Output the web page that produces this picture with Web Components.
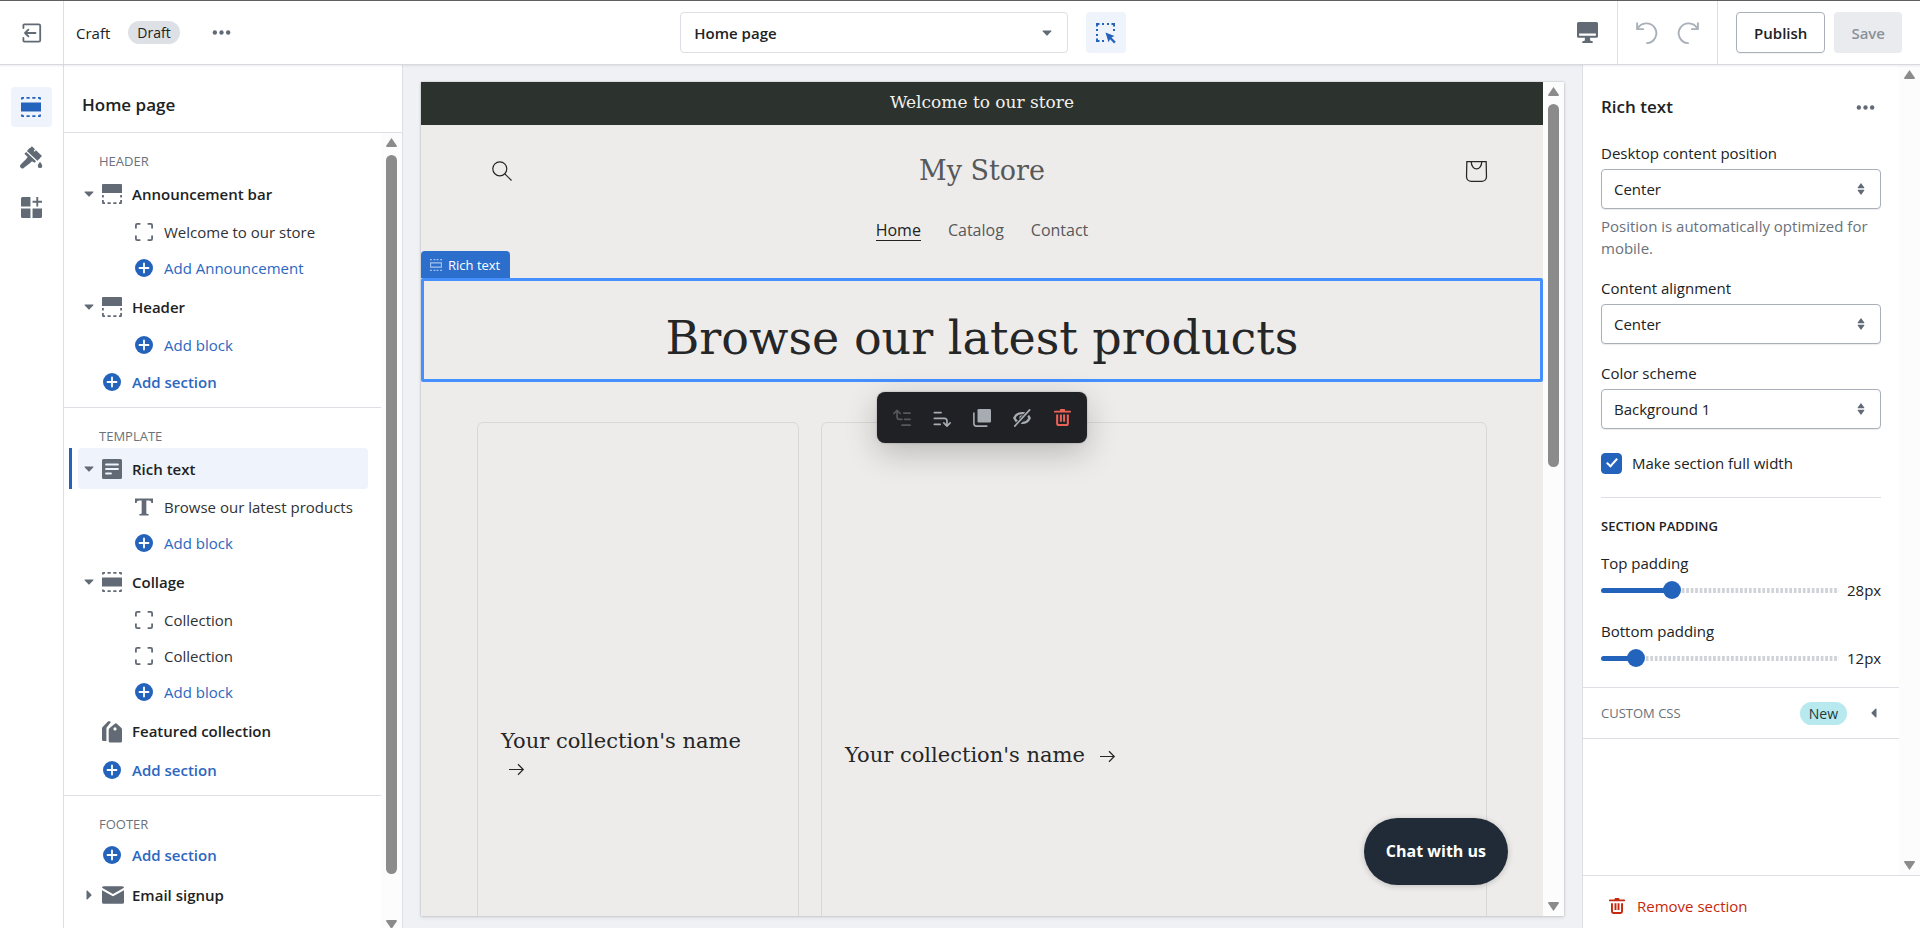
<!DOCTYPE html>
<html lang="en">
<head>
<meta charset="utf-8">
<meta name="viewport" content="width=device-width, initial-scale=1">
<title>Craft - Theme editor</title>
<style>
	:root {
		--text: #202223;
		--subdued: #6a727b;
		--icon: #616a75;
		--blue: #2463bc;
		--link: #2c67c0;
		--line: #dcdfe3;
		--selected: #eff3fc;
		--field-border: #aab0b9;
		--store-font: "DejaVu Serif", serif;
	}
	body {
		margin: 0;
		font: 15px/22px "Open Sans", "Noto Sans", sans-serif;
		color: var(--text);
	}
</style>
</head>
<body>
<theme-editor></theme-editor>

<script>
const base = `
	*, *::before, *::after { box-sizing: border-box; }
	button { font: inherit; color: inherit; background: none; border: 0; padding: 0; margin: 0; cursor: pointer; }
	a { color: inherit; text-decoration: none; }
	h1, h2, h3, p { margin: 0; font: inherit; }
`;

// small helper so every element sets up its shadow root the same way
class Base extends HTMLElement {
	constructor() {
		super();
		this.attachShadow({ mode: "open" });
	}
	connectedCallback() {
		this.shadowRoot.innerHTML = `<style>${base}${this.styles()}</style>${this.markup()}`;
	}
	styles() { return ""; }
	markup() { return "<slot></slot>"; }
}

const icons = {
	exit: `<g fill="none" stroke="currentColor" stroke-width="1.8" stroke-linecap="round" stroke-linejoin="round"><path d="M1.4 5V2.2a.8.8 0 0 1 .8-.8h14.6a1.4 1.4 0 0 1 1.4 1.4v14.400a1.4 1.4 0 0 1-1.4 1.400H2.200a.8.8 0 0 1-.8-.8V15"/><path d="M13.500 10H3.200M6.400 6.600 3 10l3.400 3.400"/></g>`,
	dots: `<circle cx="3" cy="10" r="2.3"/><circle cx="10" cy="10" r="2.3"/><circle cx="17" cy="10" r="2.3"/>`,
	section: `<path d="M0 5.5h20v9H0z"/><path d="M0 2.4V1.2A1.2 1.2 0 0 1 1.2 0H3v1.8H1.8v.6zM5.5 0h3.2v1.8H5.5zM11.3 0h3.2v1.8h-3.2zM17 0h1.8A1.2 1.2 0 0 1 20 1.2v1.2h-1.8v-.6H17zM0 17.6v1.2A1.2 1.2 0 0 0 1.2 20H3v-1.8H1.8v-.6zM5.5 18.2h3.2V20H5.5zM11.3 18.2h3.2V20h-3.2zM17 18.2V20h1.8a1.2 1.2 0 0 0 1.2-1.2v-1.2h-1.8v.6z"/>`,
	sectionLine: `<g fill="none" stroke="currentColor" stroke-width="1.8"><path d="M1 6.5h18v7H1z"/><path d="M0 1h3M6 1h3M11 1h3M17 1h3M0 19h3M6 19h3M11 19h3M17 19h3"/></g>`,
	header: `<path d="M1 0h18a1 1 0 0 1 1 1v8H0V1a1 1 0 0 1 1-1zM0 11h1.8v2.6H0zM18.2 11H20v2.6h-1.8zM0 16h1.8v2.2H3V20H1.2A1.2 1.2 0 0 1 0 18.8zM5.5 18.2h3.2V20H5.5zM11.3 18.2h3.2V20h-3.2zM18.2 16H20v2.8a1.2 1.2 0 0 1-1.2 1.2H17v-1.8h1.2z"/>`,
	brush: `<path d="M10.8.3 13.600 3l-1.200 1.500.8.700 1.300-1.300L20 9.200l-3 2.800-6.600-3.900L7.800 3.400z"/><path d="M8.800 1.800 18.200 11l-2.400 2.300L6.300 4.500zM5.600 5.500l9 8.400-1.500 1.400-2.200-1.400-1.600 1.500L3.600 19.800a2 2 0 0 1-3-2.900l5-5L7 10 4 7z"/><path d="M18.200 14.400s2 2.400 2 3.700a2 2 0 0 1-4 0c0-1.300 2-3.700 2-3.700z"/>`,
	apps: `<path d="M1.5 0H9v9H0V1.5A1.5 1.5 0 0 1 1.5 0zM0 11h9v9H1.5A1.5 1.5 0 0 1 0 18.5zM11 11h9v7.5a1.5 1.5 0 0 1-1.5 1.5H11zM14.600 0h1.800v3.600H20v1.800h-3.600V9h-1.800V5.400H11V3.600h3.600z"/>`,
	inspect: `<path d="M1 3.5V1h2.5M6 1h2M11 1h2M15.5 1H18v2.500M1 6v2M1 11v2M1 15.500V18h2.500M6 18h2M18 6v2" fill="none" stroke="currentColor" stroke-width="2"/><path d="M9.500 9.500 18.500 13l-3 1.600 4.200 4.200-1.600 1.600-4-4.200-1.600 3z"/>`,
	desktop: `<path d="M1.5 0h17A1.5 1.5 0 0 1 20 1.5v12a1.5 1.5 0 0 1-1.5 1.5h-6v2.500l2.500 1V20H5v-1.500l2.500-1V15h-6A1.5 1.5 0 0 1 0 13.500v-12A1.5 1.5 0 0 1 1.5 0zM2 11v2h16v-2z" fill-rule="evenodd"/>`,
	undo: `<g fill="none" stroke="currentColor" stroke-width="1.7" stroke-linecap="round" stroke-linejoin="round"><path d="M1 1v5.500h5.500"/><path d="M1.500 6A9 9 0 1 1 10 19.200"/></g>`,
	redo: `<g fill="none" stroke="currentColor" stroke-width="1.7" stroke-linecap="round" stroke-linejoin="round"><path d="M19 1v5.500h-5.500"/><path d="M18.500 6A9 9 0 1 0 10 19.200"/></g>`,
	caretDown: `<path d="M2 5h16a1 1 0 0 1 .8 1.700l-7.600 8a1.700 1.700 0 0 1-2.400 0l-7.600-8A1 1 0 0 1 2 5z"/>`,
	caretRight: `<path d="M5 2v16a1 1 0 0 0 1.700.8l8-7.600a1.700 1.700 0 0 0 0-2.400l-8-7.600A1 1 0 0 0 5 2z"/>`,
	caretLeft: `<path d="M15 2v16a1 1 0 0 1-1.700.8l-8-7.600a1.700 1.700 0 0 1 0-2.400l8-7.600A1 1 0 0 1 15 2z"/>`,
	updown: `<path d="M10 0l5.500 7.500a.7.7 0 0 1-.6 1.100H5.100a.7.7 0 0 1-.6-1.100zM10 20l5.500-7.500a.7.7 0 0 0-.6-1.100H5.100a.7.7 0 0 0-.6 1.100z"/>`,
	block: `<path d="M1 6V2.500A1.500 1.500 0 0 1 2.500 1H6M14 1h3.500A1.500 1.500 0 0 1 19 2.500V6M19 14v3.500a1.500 1.500 0 0 1-1.500 1.500H14M6 19H2.500A1.500 1.500 0 0 1 1 17.500V14" fill="none" stroke="currentColor" stroke-width="2"/>`,
	plus: `<circle cx="10" cy="10" r="10"/><path d="M10 5v10M5 10h10" stroke="#fff" stroke-width="2" stroke-linecap="round"/>`,
	text: `<path d="M1.500 0h17A1.500 1.500 0 0 1 20 1.500v17a1.500 1.500 0 0 1-1.500 1.500h-17A1.500 1.500 0 0 1 0 18.500v-17A1.500 1.500 0 0 1 1.500 0z"/><path d="M4 5.500h12M4 10h12M4 14.500h5" stroke="#eff3fc" stroke-width="1.8" stroke-linecap="round"/>`,
	title: `<path d="M0 .5h20v5h-1.800c-.3-2-1-2.700-3-2.700H12.600v13.600c0 1 .4 1.400 1.600 1.500l1 .1v1.500H4.800V18l1-.1c1.200-.1 1.600-.5 1.600-1.500V2.800H4.800c-2 0-2.700.7-3 2.700H0z"/>`,
	tags: `<path d="M13.200 2.500a1.200 1.200 0 0 1 1.300 0l4.700 4.200c.5.4.8 1 .8 1.600V20a1.500 1.500 0 0 1-1.500 1.500H8.200A1.500 1.500 0 0 1 6.700 20V9c0-.7.2-1.200.7-1.700zM13 6.300a1.600 1.600 0 1 0 0 3.200 1.600 1.600 0 0 0 0-3.200z" fill-rule="evenodd"/><path d="M0 7.500c0-.6.2-1.100.6-1.500L6.200.2C7 0 8.500.2 9 1L5 6c-.4.500-.6 1-.6 1.600V20H1.500A1.500 1.500 0 0 1 0 18.500z"/>`,
	mail: `<path d="M0 3.500C0 2.700.7 2 1.500 2h17c.8 0 1.500.7 1.500 1.500L10 9.200zM0 5.600l9.500 5.300a1 1 0 0 0 1 0L20 5.600V16.500a1.500 1.500 0 0 1-1.500 1.500h-17A1.500 1.500 0 0 1 0 16.500z"/>`,
	search: `<g fill="none" stroke="currentColor" stroke-width="1.200"><circle cx="7.800" cy="7.800" r="7"/><path d="M12.800 12.800 19.500 19.500"/></g>`,
	bag: `<g fill="none" stroke="currentColor" stroke-width="1.200"><path d="M.8.6h18.400l.3 14.500a4.500 4.500 0 0 1-4.500 4.300H5A4.500 4.500 0 0 1 .5 15.100z"/><path d="M5 .6a5 7 0 0 0 10 0"/></g>`,
	moveUp: `<g fill="none" stroke="currentColor" stroke-width="1.900" stroke-linecap="round" stroke-linejoin="round"><path d="M1 5 4.500 1.500 8 5M4.500 2v6.500a3 3 0 0 0 3 3H10M12 4.500h7M13 11.500h6M10 18h9"/></g>`,
	moveDown: `<g fill="none" stroke="currentColor" stroke-width="1.900" stroke-linecap="round" stroke-linejoin="round"><path d="M12 15.500l3.500 3.500 3.500-3.500M15.500 18.500V13a2.500 2.500 0 0 0-2.500-2.500H1.500M1.500 4H9M1.500 17H8"/></g>`,
	duplicate: `<path d="M6.500 0h12A1.500 1.500 0 0 1 20 1.500v12a1.500 1.500 0 0 1-1.500 1.500h-12A1.500 1.500 0 0 1 5 13.500v-12A1.500 1.500 0 0 1 6.500 0z"/><path d="M1 4v12.500A2.500 2.500 0 0 0 3.500 19H16" fill="none" stroke="currentColor" stroke-width="1.800"/>`,
	hide: `<g fill="none" stroke="currentColor" stroke-linecap="round"><path d="M1.500 10C3 6.500 6 4.500 10 4.500s7 2 8.500 5.500c-1.500 3.500-4.500 5.500-8.500 5.500S3 13.500 1.500 10z" stroke-width="2.600"/><circle cx="10" cy="10" r="2" stroke-width="2"/><path d="M2.500 19.500 19 1.500" stroke="#202124" stroke-width="5"/><path d="M2 19 18.500 1" stroke-width="1.900"/></g>`,
	trash: `<path d="M8 0h4a1 1 0 0 1 1 1v1h6a1 1 0 0 1 0 2.200H1A1 1 0 0 1 1 2h6V1a1 1 0 0 1 1-1z"/><path d="M3.700 6.500V17A1.800 1.800 0 0 0 5.500 18.800h9a1.800 1.800 0 0 0 1.800-1.800V6.500M8.100 6.500V15M11.900 6.500V15" fill="none" stroke="currentColor" stroke-width="2.400"/>`,
	arrow: `<path d="M0 10h18.500M12 3l7 7-7 7" fill="none" stroke="currentColor" stroke-width="1.600"/>`,
};

class EditorIcon extends Base {
	styles() {
		const size = this.getAttribute("size") || 20;
		return `
			:host { display: inline-flex; flex: none; width: ${size}px; height: ${size}px; }
			svg { display: block; width: 100%; height: 100%; overflow: visible; fill: currentColor; }
		`;
	}
	markup() {
		return `<svg viewBox="0 0 20 20" aria-hidden="true">${icons[this.getAttribute("name")]}</svg>`;
	}
}
customElements.define("editor-icon", EditorIcon);

// scrollbar gutter, --thumb is the share of the track that is filled
class ScrollRail extends Base {
	styles() {
		return `
			:host { display: flex; flex-direction: column; flex: none; width: 21px; background: #fcfcfc; }
			i { flex: none; width: 11px; height: 9px; margin: 5px 5px 8px; background: #8b8b8b; clip-path: polygon(50% 0, 100% 90%, 95% 100%, 5% 100%, 0 90%); }
			i:last-child { margin: 8px 5px 5px; clip-path: polygon(50% 100%, 100% 10%, 95% 0, 5% 0, 0 10%); }
			.track { flex: 1; padding: 0 5px; }
			.thumb { height: var(--thumb, 0); border-radius: 6px; background: #8b8b8b; }
		`;
	}
	markup() {
		return `<i></i><div class="track"><div class="thumb"></div></div><i></i>`;
	}
}
customElements.define("scroll-rail", ScrollRail);

class EditorTopbar extends Base {
	styles() {
		return `
			:host { display: flex; flex: none; height: 65px; background: #fff; border-top: 1px solid #5f6063; border-bottom: 1px solid #d6d9dd; box-shadow: 0 1px 2px rgba(0, 0, 0, .08); position: relative; z-index: 2; color: var(--text); }
			div { display: flex; align-items: center; }
			.left { flex: 6; }
			.right { flex: 7; justify-content: flex-end; }
			.exit { width: 64px; align-self: stretch; display: grid; place-items: center; border-right: 1px solid var(--line); color: var(--icon); }
			.name { margin: 0 18px 0 12px; }
			.badge { padding: 0 9px; line-height: 23px; border-radius: 12px; background: #dde0e4; font-size: 14px; font-weight: 500; }
			.more { margin-left: 32px; color: var(--icon); display: flex; }
			.page { display: grid; width: 388px; align-items: center; }
			select { grid-area: 1 / 1; appearance: none; height: 41px; padding: 0 13px; border: 1px solid var(--line); border-radius: 4px; background: #fff; font: 600 15px "Open Sans", sans-serif; color: inherit; }
			.page editor-icon { grid-area: 1 / 1; justify-self: end; margin-right: 16px; color: var(--icon); pointer-events: none; }
			.inspect { display: grid; place-items: center; width: 40px; height: 41px; margin-left: 18px; border-radius: 4px; background: var(--selected); color: var(--blue); }
			.device { display: flex; margin-right: 19px; color: var(--icon); }
			.history { align-self: stretch; gap: 19px; padding: 0 18px; border: solid var(--line); border-width: 0 1px; color: #a9b0b9; }
			.history button { display: flex; }
			.actions { gap: 9px; padding: 0 18px; }
			.actions button { height: 41px; padding: 0 17px; border-radius: 4px; font-weight: 600; }
			.publish { border: 1px solid var(--field-border); box-shadow: 0 1px 0 rgba(0, 0, 0, .05); }
			.save { background: #eaebef; color: #8a9199; }
		`;
	}
	markup() {
		return `
			<div class="left">
				<button class="exit" aria-label="Exit"><editor-icon name="exit"></editor-icon></button>
				<h1 class="name">Craft</h1>
				<span class="badge">Draft</span>
				<button class="more" aria-label="More actions"><editor-icon name="dots" size="19"></editor-icon></button>
			</div>
			<div>
				<div class="page">
					<select aria-label="Page"><option>Home page</option></select>
					<editor-icon name="caretDown" size="10"></editor-icon>
				</div>
				<button class="inspect" aria-label="Inspector"><editor-icon name="inspect"></editor-icon></button>
			</div>
			<div class="right">
				<button class="device" aria-label="Desktop view"><editor-icon name="desktop" size="21"></editor-icon></button>
				<div class="history">
					<button aria-label="Undo"><editor-icon name="undo" size="22"></editor-icon></button>
					<button aria-label="Redo"><editor-icon name="redo" size="22"></editor-icon></button>
				</div>
				<div class="actions">
					<button class="publish">Publish</button>
					<button class="save" disabled>Save</button>
				</div>
			</div>
		`;
	}
}
customElements.define("editor-topbar", EditorTopbar);

class EditorNav extends Base {
	styles() {
		return `
			:host { display: block; flex: none; width: 64px; border-right: 1px solid var(--line); background: #fff; }
			nav { display: flex; flex-direction: column; align-items: center; gap: 10px; padding: 22px 1px 0 0; }
			button { display: grid; place-items: center; width: 41px; height: 40px; border-radius: 4px; color: var(--icon); }
			.active { background: var(--selected); color: var(--blue); }
		`;
	}
	markup() {
		return `
			<nav>
				<button class="active" aria-label="Sections"><editor-icon name="section"></editor-icon></button>
				<button aria-label="Theme settings"><editor-icon name="brush" size="22"></editor-icon></button>
				<button aria-label="App embeds"><editor-icon name="apps" size="21"></editor-icon></button>
			</nav>
		`;
	}
}
customElements.define("editor-nav", EditorNav);

class TreeGroup extends Base {
	styles() {
		return `
			:host { display: block; padding-bottom: 6px; border-bottom: 1px solid var(--line); }
			:host(:last-of-type) { border-bottom: 0; }
			h3 { height: 40px; padding: 17px 35px 0; font-size: 13px; font-weight: 500; color: var(--subdued); text-transform: uppercase; }
		`;
	}
	markup() {
		return `<h3>${this.getAttribute("label")}</h3><slot></slot>`;
	}
}
customElements.define("tree-group", TreeGroup);

// kind: section (default), block, add-section or add-block
class TreeItem extends Base {
	styles() {
		return `
			:host { display: flex; height: 41px; padding: 0 13px 0 5px; font-weight: 600; }
			button { display: flex; flex: 1; align-items: center; margin-left: 9px; padding-left: 6px; border-radius: 4px; text-align: left; white-space: nowrap; }
			.caret { display: flex; width: 18px; color: var(--icon); }
			.icon { display: grid; place-items: center; width: 20px; margin-right: 10px; color: var(--icon); }
			:host([kind$="block"]) { height: 36px; font-weight: 400; color: #303234; }
			:host([kind$="block"]) .caret { width: 50px; }
			:host([kind="add-section"]) { height: 38px; }
			:host([kind^="add"]) { color: var(--link); }
			:host([kind^="add"]) .icon { color: var(--blue); }
			:host([selected]) { border-left: 3px solid var(--blue); margin-left: 5px; padding-left: 0; }
			:host([selected]) button { background: var(--selected); margin-left: 6px; }
		`;
	}
	markup() {
		const caret = this.getAttribute("caret");
		const size = this.getAttribute("size") || 20;
		return `
			<button>
				<span class="caret">${caret ? `<editor-icon name="${caret}" size="10"></editor-icon>` : ""}</span>
				<span class="icon"><editor-icon name="${this.getAttribute("icon")}" size="${size}"></editor-icon></span>
				<slot></slot>
			</button>
		`;
	}
}
customElements.define("tree-item", TreeItem);

class EditorSidebar extends Base {
	styles() {
		return `
			:host { display: flex; flex-direction: column; flex: none; width: 339px; min-height: 0; background: #fff; border-right: 1px solid var(--line); }
			h2 { flex: none; padding: 28px 18px 15px; line-height: 24px; font-size: 17px; font-weight: 600; border-bottom: 1px solid var(--line); }
			.body { display: flex; flex: 1; min-height: 0; overflow: hidden; }
			.tree { flex: 1; min-width: 0; overflow: hidden; }
			scroll-rail { --thumb: 95%; margin-bottom: -6px; }
		`;
	}
	markup() {
		return `
			<h2>Home page</h2>
			<div class="body">
				<div class="tree">
					<tree-group label="Header">
						<tree-item icon="header" caret="caretDown">Announcement bar</tree-item>
						<tree-item kind="block" icon="block" size="18">Welcome to our store</tree-item>
						<tree-item kind="add-block" icon="plus" size="18">Add Announcement</tree-item>
						<tree-item icon="header" caret="caretDown">Header</tree-item>
						<tree-item kind="add-block" icon="plus" size="18">Add block</tree-item>
						<tree-item kind="add-section" icon="plus" size="18">Add section</tree-item>
					</tree-group>
					<tree-group label="Template">
						<tree-item selected icon="text" caret="caretDown">Rich text</tree-item>
						<tree-item kind="block" icon="title" size="18">Browse our latest products</tree-item>
						<tree-item kind="add-block" icon="plus" size="18">Add block</tree-item>
						<tree-item icon="section" caret="caretDown">Collage</tree-item>
						<tree-item kind="block" icon="block" size="18">Collection</tree-item>
						<tree-item kind="block" icon="block" size="18">Collection</tree-item>
						<tree-item kind="add-block" icon="plus" size="18">Add block</tree-item>
						<tree-item icon="tags">Featured collection</tree-item>
						<tree-item kind="add-section" icon="plus" size="18">Add section</tree-item>
					</tree-group>
					<tree-group label="Footer">
						<tree-item kind="add-section" icon="plus" size="18">Add section</tree-item>
						<tree-item icon="mail" size="22" caret="caretRight">Email signup</tree-item>
					</tree-group>
				</div>
				<scroll-rail></scroll-rail>
			</div>
		`;
	}
}
customElements.define("editor-sidebar", EditorSidebar);

class SectionToolbar extends Base {
	styles() {
		return `
			:host { display: flex; padding: 5px; border-radius: 8px; background: #202124; color: #a6acb2; box-shadow: 0 10px 32px rgba(0, 0, 0, .22), 0 0 2px rgba(0, 0, 0, .3); }
			button { display: grid; place-items: center; width: 40px; height: 41px; }
			button:disabled { color: #55585c; }
			.delete { color: #ed6258; }
		`;
	}
	markup() {
		return `
			<button disabled aria-label="Move up"><editor-icon name="moveUp" size="18"></editor-icon></button>
			<button aria-label="Move down"><editor-icon name="moveDown" size="18"></editor-icon></button>
			<button aria-label="Duplicate"><editor-icon name="duplicate" size="18"></editor-icon></button>
			<button aria-label="Hide"><editor-icon name="hide" size="18"></editor-icon></button>
			<button class="delete" aria-label="Remove"><editor-icon name="trash" size="17"></editor-icon></button>
		`;
	}
}
customElements.define("section-toolbar", SectionToolbar);

class CollectionCard extends Base {
	styles() {
		return `
			:host { display: flex; align-items: center; padding: 0 23px; border: 1px solid #d9d8d7; border-radius: 6px; }
			:host([large]) { grid-column: span 2; aspect-ratio: 1; }
			a { font-size: 21px; line-height: 27px; }
			editor-icon { margin: 0 8px; vertical-align: middle; }
		`;
	}
	markup() {
		return `<a href="#"><slot></slot> <editor-icon name="arrow" size="15"></editor-icon></a>`;
	}
}
customElements.define("collection-card", CollectionCard);

class StorePreview extends Base {
	styles() {
		return `
			:host { display: flex; flex: 1; min-width: 0; padding: 17px 18px 12px; background: #f0f1f4; }
			.frame { display: flex; flex: 1; min-width: 0; box-shadow: 0 0 2px rgba(0, 0, 0, .25), 0 2px 4px rgba(0, 0, 0, .08); }
			scroll-rail { --thumb: 46%; }
			.page { position: relative; flex: 1; min-width: 0; overflow: hidden; background: #eeecea; color: #242628; font-family: var(--store-font); }
			.announcement { height: 43px; font-size: 17px; line-height: 41px; text-align: center; background: #2c332f; color: #f3f1ee; }
			header { display: grid; grid-template-columns: 1fr auto 1fr; align-content: start; align-items: center; height: 153px; padding: 24px 56px 0; row-gap: 27px; }
			header > button { display: grid; place-items: center; width: 49px; height: 44px; }
			header > button:last-of-type { justify-self: end; width: 22px; }
			h1 { font-size: 27px; line-height: 44px; color: #56585a; }
			nav { grid-column: 1 / -1; display: flex; justify-content: center; gap: 27px; font-family: "Open Sans", sans-serif; font-size: 16px; line-height: 20px; color: #56585a; }
			nav a { border-bottom: 1px solid transparent; }
			nav a[aria-current] { border-color: currentColor; color: #202223; }
			.selected { position: relative; padding: 28px 0 12px; outline: 3px solid #458fff; outline-offset: -3px; border-radius: 2px; text-align: center; }
			.selected h2 { font-size: 46px; line-height: 64px; }
			.tag { position: absolute; left: 0; bottom: 100%; display: flex; align-items: center; gap: 6px; height: 27px; padding: 0 10px 0 9px; border-radius: 4px 4px 0 0; background: #2c6ecb; color: #fff; font: 13px "Open Sans", sans-serif; }
			.tag editor-icon { color: #a8c5ee; }
			section-toolbar { position: absolute; top: calc(100% + 10px); left: 50%; transform: translateX(-50%); z-index: 1; }
			.collage { display: grid; grid-template-columns: repeat(3, 1fr); gap: 22px; padding: 40px 56px; }
			.chat { position: absolute; right: 35px; bottom: 31px; padding: 0 22px; border-radius: 34px; background: #202b37; color: #fff; font: 700 16px/67px "Open Sans", sans-serif; box-shadow: 0 1px 6px rgba(0, 0, 0, .2); }
		`;
	}
	markup() {
		return `
			<div class="frame">
				<div class="page">
					<p class="announcement">Welcome to our store</p>
					<header>
						<button aria-label="Search"><editor-icon name="search"></editor-icon></button>
						<h1>My Store</h1>
						<button aria-label="Cart"><editor-icon name="bag" size="21"></editor-icon></button>
						<nav>
							<a href="#" aria-current="page">Home</a>
							<a href="#">Catalog</a>
							<a href="#">Contact</a>
						</nav>
					</header>
					<section class="selected">
						<span class="tag"><editor-icon name="sectionLine" size="12"></editor-icon>Rich text</span>
						<h2>Browse our latest products</h2>
						<section-toolbar></section-toolbar>
					</section>
					<section class="collage">
						<collection-card>Your collection's name</collection-card>
						<collection-card large>Your collection's name</collection-card>
					</section>
					<button class="chat">Chat with us</button>
				</div>
				<scroll-rail></scroll-rail>
			</div>
		`;
	}
}
customElements.define("store-preview", StorePreview);

class SelectField extends Base {
	styles() {
		return `
			:host { display: block; }
			label { display: block; margin-bottom: 5px; }
			.control { display: grid; align-items: center; }
			select { grid-area: 1 / 1; appearance: none; width: 100%; height: 40px; padding: 0 12px; border: 1px solid var(--field-border); border-radius: 4px; background: #fff; box-shadow: 0 1px 1px rgba(0, 0, 0, .08); font: inherit; color: inherit; }
			editor-icon { grid-area: 1 / 1; justify-self: end; margin-right: 14px; color: var(--icon); pointer-events: none; }
			p { margin-top: 6px; color: var(--subdued); }
		`;
	}
	markup() {
		const help = this.getAttribute("help");
		return `
			<label for="select">${this.getAttribute("label")}</label>
			<div class="control">
				<select id="select"><option>${this.getAttribute("value")}</option></select>
				<editor-icon name="updown" size="12"></editor-icon>
			</div>
			${help ? `<p>${help}</p>` : ""}
		`;
	}
}
customElements.define("select-field", SelectField);

class CheckField extends Base {
	styles() {
		return `
			:host { display: block; }
			label { display: flex; align-items: center; gap: 10px; }
			input { appearance: none; display: grid; place-items: center; width: 21px; height: 21px; margin: 0; border: 1px solid var(--field-border); border-radius: 4px; }
			input:checked { background: var(--blue); border-color: var(--blue); }
			input:checked::after { content: ""; width: 6px; height: 11px; margin-bottom: 3px; border: solid #fff; border-width: 0 2px 2px 0; transform: rotate(42deg); }
		`;
	}
	markup() {
		return `<label><input type="checkbox" checked><slot></slot></label>`;
	}
}
customElements.define("check-field", CheckField);

class RangeField extends Base {
	connectedCallback() {
		super.connectedCallback();
		const input = this.shadowRoot.querySelector("input");
		input.addEventListener("input", () => this._update(input.value));
		this._update(input.value);
	}
	_update(value) {
		this.style.setProperty("--value", value);
		this.shadowRoot.querySelector("output").textContent = value + "px";
	}
	styles() {
		return `
			:host { display: block; }
			label { display: block; margin-bottom: 5px; }
			div { display: flex; align-items: center; gap: 8px; }
			input { appearance: none; flex: 1; min-width: 0; height: 22px; margin: 0; background: none; }
			input::-webkit-slider-runnable-track {
				height: 5px;
				border-radius: 3px;
				background:
					linear-gradient(var(--blue), var(--blue)) 0 0 / calc(var(--value) * 1% + 4px) 100% no-repeat,
					linear-gradient(90deg, #cfd2d8 50%, #fff 50%) 0 0 / calc(100% / 53) 100%;
			}
			input::-webkit-slider-thumb { appearance: none; width: 18px; height: 18px; margin-top: -7px; border-radius: 50%; background: var(--blue); }
			output { width: 34px; text-align: right; }
		`;
	}
	markup() {
		return `
			<label for="range">${this.getAttribute("label")}</label>
			<div>
				<input id="range" type="range" min="0" max="100" value="${this.getAttribute("value")}">
				<output for="range"></output>
			</div>
		`;
	}
}
customElements.define("range-field", RangeField);

class SettingsPanel extends Base {
	styles() {
		return `
			:host { display: flex; flex-direction: column; flex: none; width: 338px; background: #fff; border-left: 1px solid var(--line); }
			.body { display: flex; flex: 1; min-height: 0; }
			.settings { flex: 1; min-width: 0; overflow: hidden; }
			.title { display: flex; align-items: center; justify-content: space-between; padding: 30px 24px 23px 18px; }
			h2 { font-size: 17px; font-weight: 600; line-height: 24px; }
			.title button { display: flex; color: var(--icon); }
			.fields { display: flex; flex-direction: column; gap: 18px; padding: 0 18px 23px; }
			check-field { margin-top: 5px; }
			.padding { display: flex; flex-direction: column; gap: 19px; margin: 0 18px; padding: 17px 0 18px; border-top: 1px solid var(--line); }
			h3 { font-size: 13px; font-weight: 600; margin-bottom: -4px; }
			.css { display: flex; align-items: center; width: 100%; height: 52px; padding: 0 20px 0 18px; border: solid var(--line); border-width: 1px 0; font-size: 13px; font-weight: 500; color: var(--subdued); }
			.badge { margin: 0 22px 0 auto; padding: 0 9px; line-height: 23px; border-radius: 12px; background: #b7e9ee; color: #25383c; font-size: 14px; font-weight: 400; }
			.css editor-icon { color: var(--icon); }
			footer { flex: none; padding: 11px 18px 3px; border-top: 1px solid var(--line); }
			.remove { display: flex; align-items: center; gap: 12px; height: 38px; padding: 0 8px; font-weight: 500; color: #c5280c; }
		`;
	}
	markup() {
		return `
			<div class="body">
				<div class="settings">
					<div class="title">
						<h2>Rich text</h2>
						<button aria-label="More actions"><editor-icon name="dots" size="19"></editor-icon></button>
					</div>
					<div class="fields">
						<select-field label="Desktop content position" value="Center" help="Position is automatically optimized for mobile."></select-field>
						<select-field label="Content alignment" value="Center"></select-field>
						<select-field label="Color scheme" value="Background 1"></select-field>
						<check-field>Make section full width</check-field>
					</div>
					<div class="padding">
						<h3>SECTION PADDING</h3>
						<range-field label="Top padding" value="28"></range-field>
						<range-field label="Bottom padding" value="12"></range-field>
					</div>
					<button class="css">CUSTOM CSS <span class="badge">New</span><editor-icon name="caretLeft" size="10"></editor-icon></button>
				</div>
				<scroll-rail></scroll-rail>
			</div>
			<footer>
				<button class="remove"><editor-icon name="trash" size="16"></editor-icon>Remove section</button>
			</footer>
		`;
	}
}
customElements.define("settings-panel", SettingsPanel);

class ThemeEditor extends Base {
	styles() {
		return `
			:host { display: flex; flex-direction: column; height: 100vh; overflow: hidden; background: #fff; }
			main { display: flex; flex: 1; min-height: 0; }
		`;
	}
	markup() {
		return `
			<editor-topbar></editor-topbar>
			<main>
				<editor-nav></editor-nav>
				<editor-sidebar></editor-sidebar>
				<store-preview></store-preview>
				<settings-panel></settings-panel>
			</main>
		`;
	}
}
customElements.define("theme-editor", ThemeEditor);
</script>
</body>
</html>
